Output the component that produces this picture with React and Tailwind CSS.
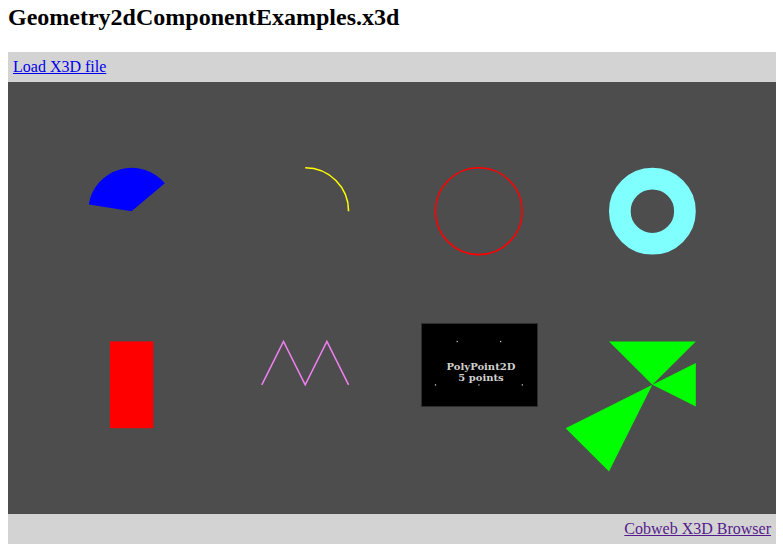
import React from 'react'

// X3D viewport: 768x432, origin in the middle, 1 unit ~ 86.8px, y up
const U = 86.8
const CX = 384
const CY = 216
const px = (x) => CX + x * U
const py = (y) => CY - y * U
const pts = (list) => list.map(([x, y]) => `${px(x)},${py(y)}`).join(' ')

function arcPoint(cx, cy, r, deg) {
  const a = (deg * Math.PI) / 180
  return [px(cx + r * Math.cos(a)), py(cy + r * Math.sin(a))]
}

function Scene() {
  const r = 0.5 * U

  // ArcClose2D (pie) from 40 to 171 degrees
  const [p1x, p1y] = arcPoint(-3, 1, 0.5, 40)
  const [p2x, p2y] = arcPoint(-3, 1, 0.5, 171)
  const pie = `M${px(-3)} ${py(1)} L${p1x} ${p1y} A${r} ${r} 0 0 0 ${p2x} ${p2y} Z`

  // Arc2D quarter circle
  const arc = `M${px(-1)} ${py(1.5)} A${r} ${r} 0 0 1 ${px(-0.5)} ${py(1)}`

  const dots = [[0.75, -0.5], [1.25, -0.5], [0.5, -1], [1, -1], [1.5, -1]]

  return (
    <svg width="768" height="432" viewBox="0 0 768 432" className="block">
      <path d={pie} fill="#0000ff" />
      <path d={arc} fill="none" stroke="#ffff00" strokeWidth="1.6" />
      <circle cx={px(1)} cy={py(1)} r={r} fill="none" stroke="#ff0000" strokeWidth="1.6" />
      <circle cx={px(3)} cy={py(1)} r={0.375 * U} fill="none" stroke="#80ffff" strokeWidth={0.25 * U} />

      <rect x={px(-3.25)} y={py(-0.5)} width={0.5 * U} height={U} fill="#ff0000" />
      <polyline
        points={pts([[-1.5, -1], [-1.25, -0.5], [-1, -1], [-0.75, -0.5], [-0.5, -1]])}
        fill="none"
        stroke="#f080f0"
        strokeWidth="1.5"
      />

      {/* PolyPoint2D label */}
      <rect x="413.5" y="241.5" width="116" height="83" fill="#000000" stroke="#2e2e2e" strokeWidth="1" />
      {dots.map(([x, y], i) => (
        <rect key={i} x={px(x) - 0.5} y={py(y) - 0.5} width="1.2" height="1.2" fill="#dddddd" />
      ))}
      <text
        x="473"
        y="288"
        textAnchor="middle"
        fill="#d0d0d0"
        fontFamily="'DejaVu Serif', serif"
        fontWeight="bold"
        fontSize="10"
      >
        <tspan x="473">PolyPoint2D</tspan>
        <tspan x="473" dy="10.7">5 points</tspan>
      </text>

      {/* TriangleSet2D */}
      <polygon points={pts([[2.5, -0.5], [3.5, -0.5], [3, -1]])} fill="#00ff00" />
      <polygon points={pts([[3, -1], [3.5, -0.75], [3.5, -1.25]])} fill="#00ff00" />
      <polygon points={pts([[3, -1], [2, -1.5], [2.5, -2]])} fill="#00ff00" />
    </svg>
  )
}

export default function App() {
  return (
    <div className="min-h-[552px] bg-white px-2 text-black" style={{ fontFamily: "'Liberation Serif', 'Times New Roman', serif" }}>
      <h1 className="pt-[2px] text-[24px] font-bold leading-[30px]">Geometry2dComponentExamples.x3d</h1>
      <div className="mt-[20px] w-[768px]">
        <div className="h-[30px] bg-[#d3d3d3] pl-[5px] text-[16px] leading-[30px]">
          <a href="#" className="text-[#0000ee] underline">Load X3D file</a>
        </div>
        <div className="h-[432px] bg-[#4d4d4d]">
          <Scene />
        </div>
        <div className="h-[30px] bg-[#d3d3d3] pr-[5px] text-right text-[16px] leading-[30px]">
          <a href="#" className="text-[#551a8b] underline">Cobweb X3D Browser</a>
        </div>
      </div>
    </div>
  )
}
